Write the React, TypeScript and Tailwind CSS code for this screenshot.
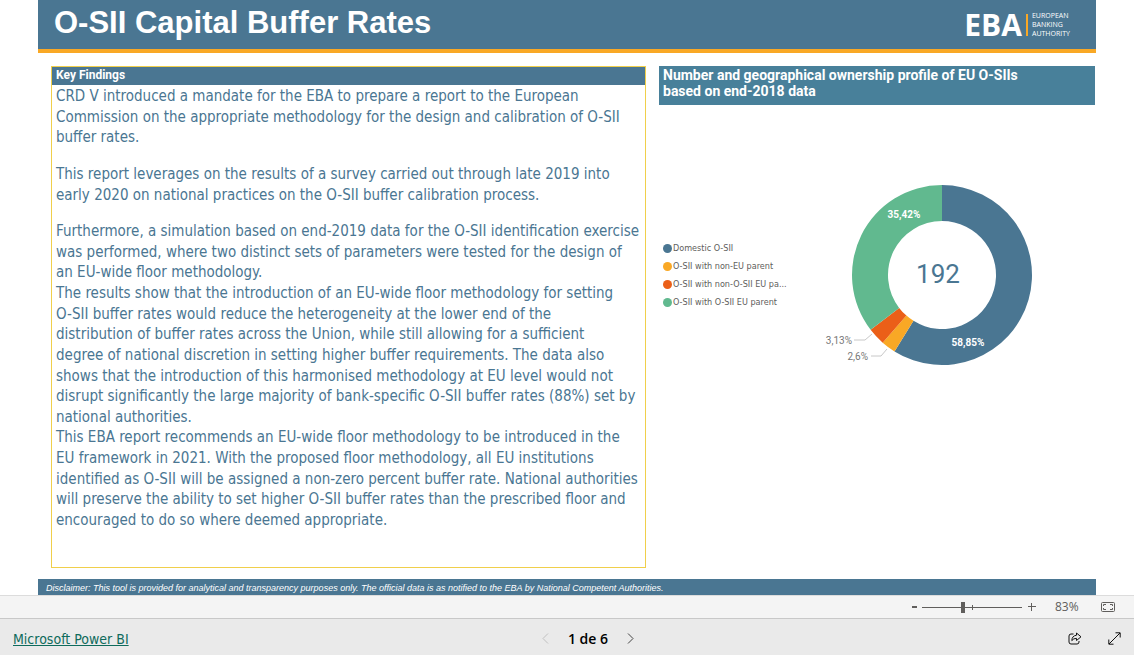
import { useState } from 'react';

const FINDINGS = [
  [
    `CRD V introduced a mandate for the EBA to prepare a report to the European
Commission on the appropriate methodology for the design and calibration of O-SII
buffer rates.`,
  ],
  [
    `This report leverages on the results of a survey carried out through late 2019 into
early 2020 on national practices on the O-SII buffer calibration process.`,
  ],
  [
    `Furthermore, a simulation based on end-2019 data for the O-SII identification exercise
was performed, where two distinct sets of parameters were tested for the design of
an EU-wide floor methodology.`,
    `The results show that the introduction of an EU-wide floor methodology for setting
O-SII buffer rates would reduce the heterogeneity at the lower end of the
distribution of buffer rates across the Union, while still allowing for a sufficient
degree of national discretion in setting higher buffer requirements. The data also
shows that the introduction of this harmonised methodology at EU level would not
disrupt significantly the large majority of bank-specific O-SII buffer rates (88%) set by
national authorities.`,
    `This EBA report recommends an EU-wide floor methodology to be introduced in the
EU framework in 2021. With the proposed floor methodology, all EU institutions
identified as O-SII will be assigned a non-zero percent buffer rate. National authorities
will preserve the ability to set higher O-SII buffer rates than the prescribed floor and
encouraged to do so where deemed appropriate.`,
  ],
];

const SLICES = [
  { label: 'Domestic O-SII', value: 58.85, color: '#4a7692' },
  { label: 'O-SII with non-EU parent', value: 2.6, color: '#f9a825' },
  { label: 'O-SII with non-O-SII EU pa...', value: 3.13, color: '#eb5f18' },
  { label: 'O-SII with O-SII EU parent', value: 35.42, color: '#61b98f' },
];

const CX = 122;
const CY = 105;

function point(share: number, r: number) {
  const a = (share / 100) * Math.PI * 2;
  return `${(CX + r * Math.sin(a)).toFixed(2)} ${(CY - r * Math.cos(a)).toFixed(2)}`;
}

function arc(from: number, to: number) {
  const large = to - from > 50 ? 1 : 0;
  return `M${point(from, 90)}A90 90 0 ${large} 1 ${point(to, 90)}L${point(to, 54)}A54 54 0 ${large} 0 ${point(from, 54)}Z`;
}

function Donut() {
  let start = 0;
  return (
    <svg width="220" height="210" viewBox="0 0 220 210" className="shrink-0 font-['Roboto',sans-serif]" role="img" aria-label="O-SII ownership profile">
      {SLICES.map((s) => {
        const from = start;
        start += s.value;
        return <path key={s.label} d={arc(from, start)} fill={s.color} />;
      })}
      <path d="M34 170H45L52 164M51 186H61L67 179" fill="none" stroke="#c8c8c8" />
      <text x="118" y="113" textAnchor="middle" fontSize="26" fill="#4a7692">192</text>
      <g fontSize="10" textAnchor="middle" fontWeight="700" fill="#fff">
        <text x="84" y="48">35,42%</text>
        <text x="148" y="176">58,85%</text>
      </g>
      <g fontSize="10" textAnchor="end" fill="#777">
        <text x="32" y="174">3,13%</text>
        <text x="48" y="190">2,6%</text>
      </g>
    </svg>
  );
}

function Logo() {
  return (
    <div className="flex items-center gap-1 text-white" aria-label="European Banking Authority">
      <span className="text-[30px] leading-6 font-bold">EBA</span>
      <span className="h-[22px] w-[2px] bg-[#f9a825]" />
      <span className="text-[7px] leading-[9px]">
        EUROPEAN
        <br />
        BANKING
        <br />
        AUTHORITY
      </span>
    </div>
  );
}

function ZoomBar() {
  const [zoom, setZoom] = useState(41);
  return (
    <div className="flex h-[23px] items-center justify-end border-t border-[#dcdcdc] bg-[#f4f4f4] pr-[19px] text-[#605e5c]">
      <button aria-label="Zoom out" className="grid h-5 w-4 place-items-center">
        <svg width="5" height="2"><path d="M0 1H5" stroke="currentColor" strokeWidth="2" /></svg>
      </button>
      <div className="relative flex items-center">
        <input
          type="range"
          aria-label="Zoom"
          value={zoom}
          onChange={(e) => setZoom(Number(e.target.value))}
          className="h-[11px] w-[100px] appearance-none bg-[linear-gradient(#605e5c,#605e5c)] bg-[length:100%_1px] bg-center bg-no-repeat [&::-webkit-slider-thumb]:h-[11px] [&::-webkit-slider-thumb]:w-1 [&::-webkit-slider-thumb]:appearance-none [&::-webkit-slider-thumb]:bg-[#605e5c]"
        />
        <span className="absolute top-[3px] left-[50px] h-[5px] w-px bg-[#605e5c]" />
      </div>
      <button aria-label="Zoom in" className="grid h-5 w-5 place-items-center">
        <svg width="8" height="8"><path d="M0 3.5H8M3.5 0V8" stroke="currentColor" /></svg>
      </button>
      <span className="ml-[13px] w-[46px] text-xs">83%</span>
      <button aria-label="Fit to page">
        <svg width="14" height="10" viewBox="0 0 14 10" fill="none" stroke="currentColor">
          <rect x=".5" y=".5" width="13" height="9" rx="1" />
          <path d="M5 2.5H2.5V4M2.5 6V7.5H5M9 2.5H11.5V4M11.5 6V7.5H9" />
        </svg>
      </button>
    </div>
  );
}

function Footer() {
  return (
    <footer className="grid h-[37px] grid-cols-3 items-center border-t border-[#c8c8c8] bg-[#eaeaea] px-[13px] pt-[3px]">
      <a href="#" className="justify-self-start font-['DejaVu_Sans_Condensed',sans-serif] text-sm text-[#0f6b5c] underline">
        Microsoft Power BI
      </a>
      <div className="flex items-center gap-[19px] justify-self-center pl-[42px]">
        <button aria-label="Previous page" disabled>
          <svg width="7" height="11" fill="none" stroke="#c0c0c0"><path d="M6 .5L1 5.5L6 10.5" /></svg>
        </button>
        <span className="text-sm font-semibold text-black">1 de 6</span>
        <button aria-label="Next page">
          <svg width="7" height="11" fill="none" stroke="#444"><path d="M1 .5L6 5.5L1 10.5" /></svg>
        </button>
      </div>
      <div className="flex items-center gap-[26px] justify-self-end">
        <button aria-label="Share">
          <svg width="14" height="13" viewBox="0 0 14 13" fill="none" stroke="#111" strokeLinejoin="round">
            <path d="M5.5 2H3Q1 2 1 4V10Q1 12 3 12H9Q11 12 11 10V9" />
            <path d="M8.5 1L13 4.8L8.5 8.5V6.4Q5.5 6.2 3.8 8.6Q4 3.8 8.5 3.2Z" />
          </svg>
        </button>
        <button aria-label="Full screen">
          <svg width="13" height="13" viewBox="0 0 13 13" fill="none" stroke="#111">
            <path d="M1 12L12 1M7.5 .8H12.2V5.5M.8 7.5V12.2H5.5" />
          </svg>
        </button>
      </div>
    </footer>
  );
}

export default function App() {
  return (
    <div className="flex min-h-screen flex-col bg-white font-['Open_Sans',sans-serif]">
      <div className="mx-[38px] flex flex-1 flex-col">
        <header className="flex h-[53px] items-center justify-between border-b-4 border-[#f9a825] bg-[#4a7692] pr-[26px] pl-4">
          <h1 className="pb-1 font-['Liberation_Sans',Arial,sans-serif] text-[31px] leading-8 font-bold text-white">
            O-SII Capital Buffer Rates
          </h1>
          <Logo />
        </header>

        <main className="grid flex-1 grid-cols-[minmax(0,595fr)_minmax(0,436fr)] gap-[13px] pt-[13px] pr-px pb-[11px] pl-[13px]">
          <section className="border border-[#f0cf4b] pb-9">
            <h2 className="bg-[#4a7692] px-1 pb-0.5 font-['Roboto',sans-serif] text-xs leading-4 font-bold text-white">
              Key Findings
            </h2>
            <div className="flex flex-col gap-4 px-1 pt-px font-['DejaVu_Sans_Condensed',sans-serif] text-[15px] leading-snug whitespace-pre text-[#4a7692]">
              {FINDINGS.map((group, i) => (
                <div key={i}>
                  {group.map((text) => (
                    <p key={text}>{text}</p>
                  ))}
                </div>
              ))}
            </div>
          </section>

          <section>
            <h2 className="bg-[#48809a] px-1 pt-px pb-[6px] font-['Roboto',sans-serif] text-sm leading-4 font-bold text-white">
              Number and geographical ownership profile of EU O-SIIs
              <br />
              based on end-2018 data
            </h2>
            <div className="flex items-center pt-[65px] pl-1">
              <ul className="w-[157px] shrink-0 font-['DejaVu_Sans_Condensed',sans-serif] text-[9px] leading-[18px] whitespace-nowrap text-[#605e5c]">
                {SLICES.map((s) => (
                  <li key={s.label} className="flex items-center gap-px">
                    <span className="size-[9px] rounded-full" style={{ backgroundColor: s.color }} />
                    {s.label}
                  </li>
                ))}
              </ul>
              <Donut />
            </div>
          </section>
        </main>

        <p className="bg-[#4a7692] pt-0.5 pl-2 font-['Liberation_Sans',Arial,sans-serif] text-[9px] leading-[14px] text-white italic">
          Disclaimer: This tool is provided for analytical and transparency purposes only. The official data is as notified to the EBA by National Competent Authorities.
        </p>
      </div>
      <ZoomBar />
      <Footer />
    </div>
  );
}
